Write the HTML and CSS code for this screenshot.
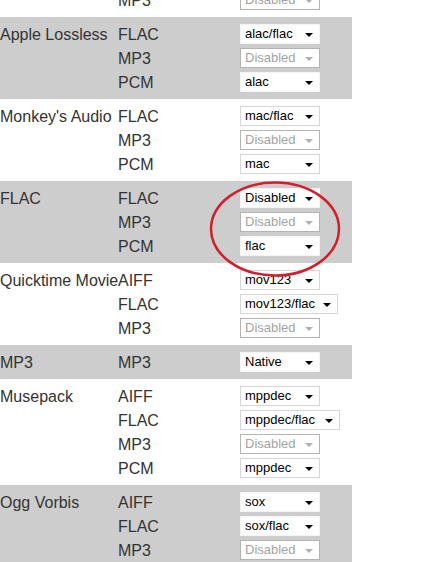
FILE: index.html
```html
<!DOCTYPE html>
<html>
<head>
<meta charset="utf-8">
<link rel="stylesheet" href="styles.css">
</head>
<body>
<div class="page">
  <div class="table">
    <div class="group">
      <div class="label"></div>
      <div class="rows">
        <div class="row"><span class="fmt">MP3</span><div class="sel disabled"><span>Disabled</span><i></i></div></div>
      </div>
    </div>
    <div class="group alt">
      <div class="label">Apple Lossless</div>
      <div class="rows">
        <div class="row"><span class="fmt">FLAC</span><div class="sel"><span>alac/flac</span><i></i></div></div>
        <div class="row"><span class="fmt">MP3</span><div class="sel disabled"><span>Disabled</span><i></i></div></div>
        <div class="row"><span class="fmt">PCM</span><div class="sel"><span>alac</span><i></i></div></div>
      </div>
    </div>
    <div class="group">
      <div class="label">Monkey's Audio</div>
      <div class="rows">
        <div class="row"><span class="fmt">FLAC</span><div class="sel"><span>mac/flac</span><i></i></div></div>
        <div class="row"><span class="fmt">MP3</span><div class="sel disabled"><span>Disabled</span><i></i></div></div>
        <div class="row"><span class="fmt">PCM</span><div class="sel"><span>mac</span><i></i></div></div>
      </div>
    </div>
    <div class="group alt">
      <div class="label">FLAC</div>
      <div class="rows">
        <div class="row"><span class="fmt">FLAC</span><div class="sel"><span>Disabled</span><i></i></div></div>
        <div class="row"><span class="fmt">MP3</span><div class="sel disabled"><span>Disabled</span><i></i></div></div>
        <div class="row"><span class="fmt">PCM</span><div class="sel"><span>flac</span><i></i></div></div>
      </div>
    </div>
    <div class="group">
      <div class="label">Quicktime Movie</div>
      <div class="rows">
        <div class="row"><span class="fmt">AIFF</span><div class="sel"><span>mov123</span><i></i></div></div>
        <div class="row"><span class="fmt">FLAC</span><div class="sel w98"><span>mov123/flac</span><i></i></div></div>
        <div class="row"><span class="fmt">MP3</span><div class="sel disabled"><span>Disabled</span><i></i></div></div>
      </div>
    </div>
    <div class="group alt">
      <div class="label">MP3</div>
      <div class="rows">
        <div class="row"><span class="fmt">MP3</span><div class="sel"><span>Native</span><i></i></div></div>
      </div>
    </div>
    <div class="group">
      <div class="label">Musepack</div>
      <div class="rows">
        <div class="row"><span class="fmt">AIFF</span><div class="sel"><span>mppdec</span><i></i></div></div>
        <div class="row"><span class="fmt">FLAC</span><div class="sel w100"><span>mppdec/flac</span><i></i></div></div>
        <div class="row"><span class="fmt">MP3</span><div class="sel disabled"><span>Disabled</span><i></i></div></div>
        <div class="row"><span class="fmt">PCM</span><div class="sel"><span>mppdec</span><i></i></div></div>
      </div>
    </div>
    <div class="group alt">
      <div class="label">Ogg Vorbis</div>
      <div class="rows">
        <div class="row"><span class="fmt">AIFF</span><div class="sel"><span>sox</span><i></i></div></div>
        <div class="row"><span class="fmt">FLAC</span><div class="sel"><span>sox/flac</span><i></i></div></div>
        <div class="row"><span class="fmt">MP3</span><div class="sel disabled"><span>Disabled</span><i></i></div></div>
      </div>
    </div>
  </div>
  <svg class="circle" width="140" height="104" viewBox="0 0 140 104">
    <ellipse cx="70" cy="52" rx="64" ry="46.5" fill="none" stroke="#d11f2b" stroke-width="2.5"/>
  </svg>
</div>
</body>
</html>
```

FILE: styles.css
```css
html, body {
  margin: 0;
  padding: 0;
  background: #fff;
  overflow: hidden;
}
.page {
  position: relative;
  width: 426px;
  height: 562px;
  overflow: hidden;
}
.table {
  width: 352px;
  margin-top: -17px;
  font-family: "Liberation Sans", Arial, sans-serif;
  font-size: 16px;
  color: #333;
}
.group {
  display: flex;
  padding: 5px 0;
  background: #fff;
}
.group.alt {
  background: #cdcdcd;
}
.label {
  width: 118px;
  flex: none;
  padding-top: 1px;
  line-height: 23px;
  white-space: nowrap;
}
.rows {
  display: flex;
  flex-direction: column;
}
.row {
  display: flex;
  align-items: flex-start;
  height: 24px;
  line-height: 24px;
}
.fmt {
  width: 122px;
  flex: none;
  padding-top: 1px;
  line-height: 23px;
}
.sel {
  box-sizing: border-box;
  margin-top: 2px;
  width: 80px;
  height: 20px;
  display: flex;
  align-items: center;
  justify-content: space-between;
  padding: 0 6px 0 4px;
  background: #fff;
  border: 1px solid #d6d6d6;
  font-size: 13px;
  line-height: 18px;
  color: #000;
}
.group.alt .sel {
  border-color: #f4f4f4;
}
.sel.w98 { width: 98px; }
.sel.w100 { width: 100px; }
.sel i {
  width: 0;
  height: 0;
  margin-top: 1px;
  border-left: 4px solid transparent;
  border-right: 4px solid transparent;
  border-top: 4px solid #000;
}
.sel.disabled,
.group.alt .sel.disabled {
  color: #a3a3a3;
  border-color: #b3b3b3;
}
.sel.disabled i {
  border-top-color: #b0b0b0;
}
.circle {
  position: absolute;
  left: 205px;
  top: 177px;
}
```
